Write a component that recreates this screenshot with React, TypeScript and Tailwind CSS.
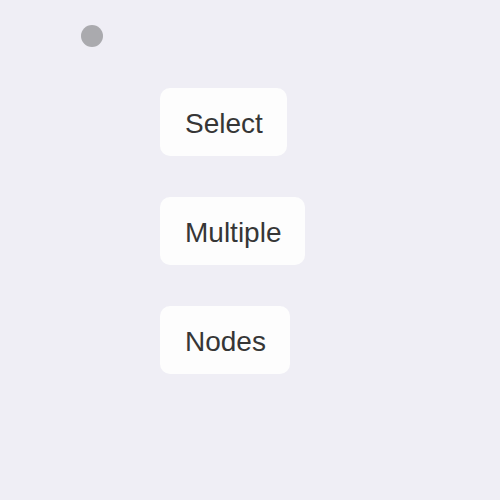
export default function App() {
  const items = ["Select", "Multiple", "Nodes"];
  return (
    <div className="w-[500px] h-[500px] bg-[#efeef5] overflow-hidden" style={{ fontFamily: '"Liberation Sans", Arial, sans-serif' }}>
      <div className="pt-[25px] pl-[81px]">
        <div className="w-[22px] h-[22px] rounded-full bg-[#aaaaae]" />
      </div>
      <div className="mt-[41px] ml-[160px] flex flex-col items-start gap-[41px]">
        {items.map((t) => (
          <div key={t} className="h-[68px] pl-[25px] pr-[24px] pt-[3px] flex items-center bg-[#fdfdfd] rounded-[10px] text-[28px] text-[#363636]">
            {t}
          </div>
        ))}
      </div>
    </div>
  );
}
